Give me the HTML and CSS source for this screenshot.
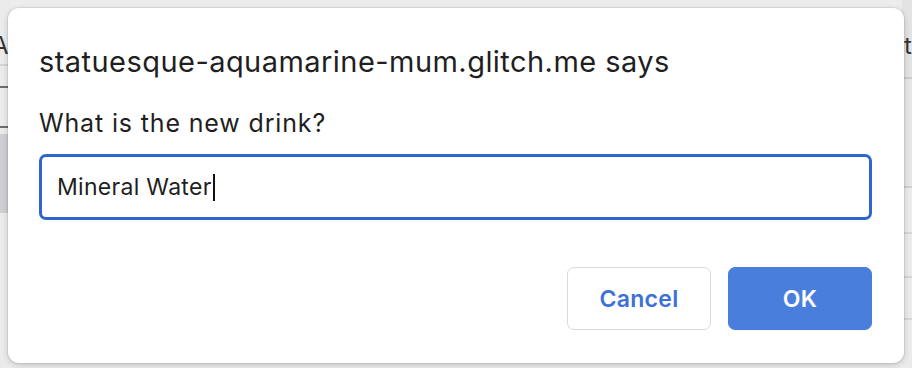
FILE: index.html
```html
<!doctype html>
<html lang="en">
<head>
  <meta charset="utf-8" />
  <title>Prompt</title>
  <link rel="stylesheet" href="styles.css">
</head>
<body>
  <div class="page">
    <div class="edge left">
      <div class="row r1"><span class="peek">A</span></div>
      <div class="row r2"></div>
      <div class="row r3"></div>
      <div class="row r4"></div>
      <div class="row r5"></div>
    </div>
    <div class="edge right">
      <div class="row q1"><span class="peek">t</span></div>
      <div class="row q2"></div>
      <div class="row q3"></div>
      <div class="row q4"></div>
      <div class="row q5"></div>
    </div>
  </div>

  <div class="dialog" role="dialog">
    <h1 class="title">statuesque-aquamarine-mum.glitch.me says</h1>
    <p class="msg">What is the new drink?</p>
    <div class="field"><span class="value">Mineral Water</span><span class="caret"></span></div>
    <div class="actions">
      <button class="btn cancel" type="button">Cancel</button>
      <button class="btn ok" type="button">OK</button>
    </div>
  </div>
</body>
</html>
```

FILE: styles.css
```css
*,*::before,*::after{box-sizing:border-box}
html,body{margin:0;height:100%}
body{background:#ececec;font-family:Inter,"Noto Sans",Roboto,sans-serif;color:#1f1f1f;overflow:hidden;position:relative}

/* the page behind the dialog, only its edges show */
.page{display:flex;justify-content:space-between;height:368px}
.edge{width:10px;display:flex;flex-direction:column;background:#ebebeb}
.edge .row{border-bottom:2px solid #c9c9c9}
.peek{display:block;font-size:24px;line-height:28px;color:#333;padding-top:32px}
.left .peek{margin-left:-8px}
.right .peek{margin-left:2px}
.r1{height:66px;border-color:#d4d4d4 !important}
.r2{height:22px;border-color:#6d6d6d !important}
.r3{height:40px;border-color:#6d6d6d !important}
.r4{height:8px;border-color:#cfcfcf !important}
.r5{height:77px;background:#cfd0d3;border-color:#d0d0d0 !important}
.q1{height:79px;background:#e3e3e3;border-color:#cbcbcb !important}
.q2{height:109px;background:#e6e6e6;border-color:#cfcfcf !important}
.q3{height:46px;border-color:#d6d6d6 !important}
.q4{height:44px;border-color:#d6d6d6 !important}
.q5{height:42px;border-color:#d6d6d6 !important}

.dialog{position:absolute;left:8px;top:8px;width:896px;height:355px;background:#fff;border-radius:11px;
  box-shadow:0 0 0 1px rgba(0,0,0,.06),0 2px 6px rgba(0,0,0,.18);padding:37px 32px 0 31px;display:flex;flex-direction:column}
.title{margin:0;font-size:29px;font-weight:400;line-height:34px;letter-spacing:.45px}
.msg{margin:29px 0 0;font-size:25px;line-height:30px;letter-spacing:.85px}
.field{margin-top:16px;height:66px;border:3px solid #2f65cf;border-radius:7px;display:flex;align-items:center;padding-left:15px}
.value{font-size:23px;letter-spacing:.3px}
.caret{width:2px;height:27px;background:#111;margin-left:1px}
.actions{display:flex;justify-content:flex-end;gap:17px;margin-top:47px}
.btn{width:144px;height:63px;border-radius:7px;font-family:inherit;font-size:23px;font-weight:600;letter-spacing:.3px}
.cancel{background:#fff;border:1px solid #dadada;color:#3b71d8}
.ok{background:#4a7edd;border:1px solid #4a7edd;color:#fff}
```
